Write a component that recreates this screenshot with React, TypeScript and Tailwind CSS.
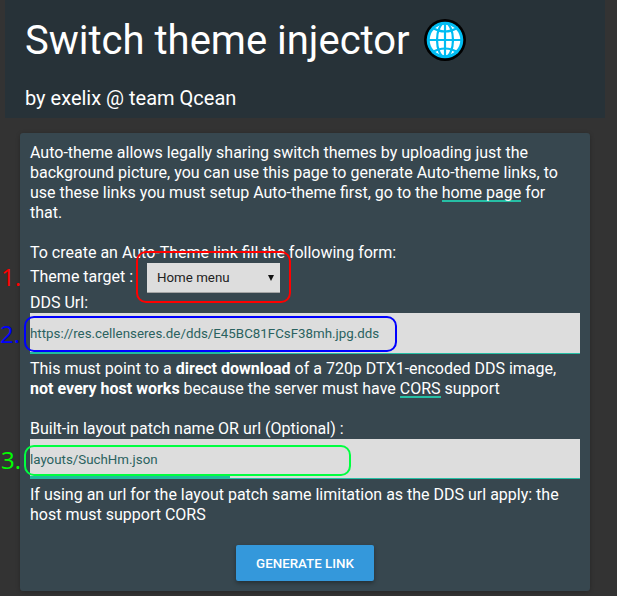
const Link = ({ children }: { children: string }) => (
  <a className="inline-block h-[19px] border-b-2 border-[#26bfa5] align-top">{children}</a>
);

const Field = ({ value, thick }: { value: string; thick?: boolean }) => (
  <div
    className={
      thick
        ? "relative flex h-10 items-center border-b border-[#26bfa5] bg-[#ddd] pt-[2px] text-[13.33px] text-[#2a625f]"
        : "relative flex h-[41px] items-center border-b border-[#26bfa5] bg-[#ddd] pt-px text-[13.33px] text-[#2a625f]"
    }
  >
    <span className="whitespace-pre">{value}</span>
    <div className={thick ? "absolute -bottom-px left-0 h-[3px] w-[200px] bg-[#20bc9d]" : "absolute -bottom-px left-0 h-0.5 w-[200px] bg-[#20bc9d]"} />
  </div>
);

export default function App() {
  return (
    <div className="relative h-[596px] w-[617px] overflow-hidden bg-[#333] font-['Roboto',sans-serif] text-white">
      <header className="ml-[5px] h-[118px] w-[600px] bg-[#273238] px-5 pt-[14px]">
        <h1 className="flex h-[52px] items-center text-[40px] leading-[52px] font-normal">
          <span className="w-[385px] pt-[2px] whitespace-pre">Switch theme injector</span>
          <svg className="ml-[14px] h-[42px] w-[42px]" viewBox="0 0 42 42" fill="none">
            <circle cx="21" cy="21" r="21" fill="#000" />
            <circle cx="21" cy="21" r="18.3" fill="#00bcf2" />
            <circle cx="21" cy="21" r="15.3" fill="#fff" />
            <g stroke="#00bcf2" strokeWidth="2.2">
              <path d="M21 4v34M4 21h34" />
              <ellipse cx="21" cy="21" rx="8" ry="17" />
              <path d="M8 8.5Q21 16.5 34 8.5M8 33.5Q21 25.5 34 33.5" />
            </g>
          </svg>
        </h1>
        <p className="mt-5 text-[20px] leading-6">by exelix @ team Qcean</p>
      </header>
      <main className="mt-[15px] ml-5 h-[458px] w-[570px] rounded-[3px] bg-[#37474f] px-[10px] pt-[10px] text-[16px] leading-5 whitespace-nowrap shadow-[0_1px_4px_rgba(0,0,0,0.25)]">
        <p>
          Auto-theme allows legally sharing switch themes by uploading just the<br />
          background picture, you can use this page to generate Auto-theme links, to<br />
          use these links you must setup Auto-theme first, go to the <Link>home page</Link> for<br />
          that.
        </p>
        <p className="mt-5">To create an Auto-Theme link fill the following form:</p>
        <div className="flex h-[30px] items-start">
          <span className="w-[117px] pt-1">Theme target :</span>
          <div className="flex h-[30px] w-[133px] items-center justify-between border-b border-[#a5a5a5] bg-[#ddd] pr-[6px] pl-[10px] text-[13.33px] text-[#222]">
            <span>Home menu</span>
            <svg className="h-[6px] w-[6px]" viewBox="0 0 6 6"><path d="M0 0h6L3 6z" fill="#111" /></svg>
          </div>
        </div>
        <p>DDS Url:</p>
        <Field value="https://res.cellenseres.de/dds/E45BC81FCsF38mh.jpg.dds" />
        <p className="mt-[5px]">
          This must point to a <b>direct download</b> of a 720p DTX1-encoded DDS image,<br />
          <b>not every host works</b> because the server must have <Link>CORS</Link> support
        </p>
        <p className="mt-5">Built-in layout patch name OR url (Optional) :</p>
        <Field value="layouts/SuchHm.json" thick />
        <p className="mt-[6px]">
          If using an url for the layout patch same limitation as the DDS url apply: the<br />
          host must support CORS
        </p>
        <div className="mt-5 flex justify-center">
          <button className="h-9 w-[138px] rounded-[2px] bg-[#3498db] pt-px text-[13.33px] font-medium shadow-[0_2px_4px_rgba(0,0,0,0.35)]">GENERATE LINK</button>
        </div>
      </main>
      <div className="absolute top-[251px] left-[136px] h-[52px] w-[155px] rounded-[10px] border-2 border-[#f00]" />
      <div className="absolute top-[316px] left-[24px] h-[36px] w-[373px] rounded-[10px] border-2 border-[#00f]" />
      <div className="absolute top-[445px] left-[24px] h-[31px] w-[327px] rounded-[10px] border-2 border-[#00ff40]" />
      <span className="absolute top-[261px] left-px font-['Open_Sans',sans-serif] text-[24px] leading-8 text-[#f00]">1.</span>
      <span className="absolute top-[318px] left-0 font-['Open_Sans',sans-serif] text-[24px] leading-8 text-[#00f]">2.</span>
      <span className="absolute top-[444px] left-px font-['Open_Sans',sans-serif] text-[24px] leading-8 text-[#0f0]">3.</span>
    </div>
  );
}
